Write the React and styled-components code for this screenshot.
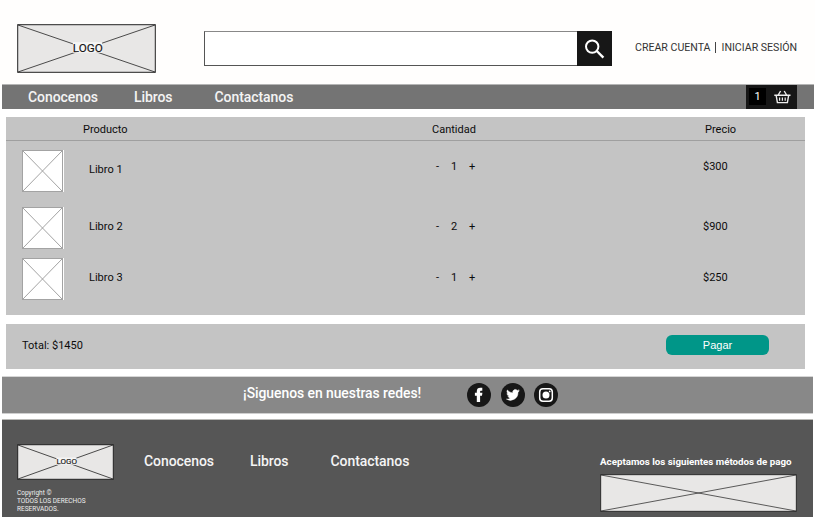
import React from "react";
import styled, { createGlobalStyle } from "styled-components";

const GlobalStyle = createGlobalStyle`
  * { box-sizing: border-box; }
  body { margin: 0; background: #fff; font-family: Roboto, "Liberation Sans", sans-serif; color: #111; overflow: hidden; }
`;

const Page = styled.div`
  width: 815px;
  height: 517px;
  display: flex;
  flex-direction: column;
  overflow: hidden;
`;

const Text = styled.span`
  display: block;
  white-space: nowrap;
  font-size: ${(p) => p.$size || 11}px;
  line-height: ${(p) => p.$line || 14}px;
  font-weight: ${(p) => p.$weight || 400};
  letter-spacing: ${(p) => p.$track || 0}px;
  color: ${(p) => p.$color || "#0c0c0c"};
`;

const Header = styled.header`
  height: 84px;
  flex: none;
  display: flex;
  align-items: flex-start;
  padding: 24px 0 0 17px;
  background: #fffefd;
`;

const SearchForm = styled.div`
  display: flex;
  width: 408px;
  height: 35px;
  margin: 7px 0 0 48px;
`;

const SearchField = styled.input`
  flex: 1;
  min-width: 0;
  padding: 0 10px;
  border: 1px solid #555;
  border-top-color: #888;
  border-right: 0;
  border-radius: 0;
  background: #fff;
  outline: none;
`;

const SearchButton = styled.button`
  width: 35px;
  padding: 0;
  border: 0;
  background: #171717;
  display: grid;
  place-items: center;
`;

const Account = styled.div`
  display: flex;
  align-items: center;
  margin: 17px 0 0 23px;
`;

const Divider = styled.i`
  width: 1px;
  height: 11px;
  margin: 0 6px 2px 4px;
  background: #444;
`;

const NavBar = styled.nav`
  flex: none;
  display: flex;
  height: 25px;
  margin: 0 1px 0 2px;
  padding: 0 17px 0 26px;
  border-top: 1px solid #b5b5b5;
  background: #747474;
`;

const NavLinks = styled.div`
  display: flex;
  align-items: flex-start;
  padding-top: ${(p) => p.$top}px;
`;

const NavLink = styled(Text).attrs({ as: "a", $size: 14, $line: 16, $weight: 500, $color: "#f4f4f4" })`
  width: ${(p) => p.$width}px;
  letter-spacing: -0.07px;
`;

const Cart = styled.div`
  display: flex;
  align-items: center;
  width: 51px;
  margin-left: auto;
  padding-left: 3px;
  background: #171717;
`;

const CartCount = styled(Text)`
  width: 17px;
  height: 17px;
  margin: 0 8px 1px 0;
  text-align: center;
  background: #000;
`;

const Products = styled.section`
  flex: none;
  height: 198px;
  margin: 8px 10px 0 6px;
  background: #c4c4c4;
`;

const ProductsHead = styled.div`
  display: grid;
  grid-template-columns: 349px 273px 1fr;
  height: 24px;
  padding: 6px 0 0 77px;
  border-bottom: 1px solid #9f9f9f;
`;

const ProductRow = styled.div`
  display: grid;
  grid-template-columns: 67px 347px 267px 1fr;
  height: 42px;
  margin-top: ${(p) => p.$gap}px;
  padding-left: 16px;
`;

const Cell = styled.div`
  display: flex;
  padding-top: ${(p) => p.$top}px;
`;

const Step = styled(Text)`
  width: ${(p) => p.$width}px;
`;

const TotalBar = styled.section`
  flex: none;
  display: flex;
  justify-content: space-between;
  height: 45px;
  margin: 9px 10px 0 6px;
  padding: 11px 36px 0 16px;
  background: #c4c4c4;
`;

const PayButton = styled.button`
  width: 103px;
  height: 20px;
  padding: 0;
  border: 0;
  border-radius: 6px;
  background: #009688;
  display: grid;
  place-items: center;
`;

const Social = styled.section`
  flex: none;
  display: flex;
  height: 38px;
  margin: 7px 2px 0;
  padding: 7px 0 0 241px;
  border-top: 1px solid #d6d6d6;
  border-bottom: 1px solid #cfcfcf;
  background: #888;
`;

const SocialText = styled(Text)`
  width: 224px;
  padding-top: 1px;
`;

const SocialIcons = styled.div`
  display: flex;
  gap: 9.6px;
  margin-top: -1.4px;
`;

const Footer = styled.footer`
  flex: 1;
  display: flex;
  margin: 5px 2px 0;
  padding-left: 15px;
  border-top: 1px solid #b9b9b6;
  background: #565656;
`;

const Brand = styled.div`
  width: 127px;
  padding-top: 24px;
`;

const Copyright = styled.p`
  margin: 10px 0 0;
  font-size: 6.5px;
  line-height: 7.8px;
  color: #eee;
`;

const Payments = styled.div`
  display: flex;
  flex-direction: column;
  gap: 5px;
  width: 198px;
  margin-left: auto;
  margin-right: 15px;
  padding-top: 35px;
`;

const Drawing = styled.svg`
  display: block;
  flex: none;
`;

function CrossBox({ width, height, fill = "#e8e7e6", stroke = "#222", line = 1, label, size }) {
  const cx = width / 2;
  const cy = height / 2;
  const mask = label ? size * 2.5 : 0;
  return (
    <Drawing width={width} height={height}>
      <rect x="0.7" y="0.7" width={width - 1.4} height={height - 1.4} fill={fill} stroke={stroke} strokeWidth={line} />
      <path d={`M1 1 L${width - 1} ${height - 1} M${width - 1} 1 L1 ${height - 1}`} stroke={stroke} strokeWidth={line * 0.8} />
      {label && (
        <>
          <rect x={cx - mask / 2 + 1} y={cy - size * 0.5 - 0.5} width={mask} height={size * 0.9} fill="#f6f6f5" />
          <text x={cx + 1.3} y={cy + size * 0.35 - 0.7} textAnchor="middle" fontSize={size} fontWeight="400" fill="#151515" stroke="#151515" strokeWidth="0.15">
            {label}
          </text>
        </>
      )}
    </Drawing>
  );
}

const Thumb = () => (
  <Drawing width="42" height="42">
    <rect width="42" height="42" fill="#fff" />
    <rect x="0.5" y="0.5" width="40" height="41" fill="none" stroke="#a3a3a3" />
    <path d="M1 1 40 41M40 1 1 41" stroke="#999" strokeWidth="0.9" />
  </Drawing>
);

const SearchIcon = () => (
  <Drawing width="20" height="20" fill="none" stroke="#fff">
    <circle cx="7.2" cy="7.6" r="6.2" strokeWidth="2" />
    <path d="M11.8 12 18.4 18.7" strokeWidth="2.4" />
  </Drawing>
);

const BasketIcon = () => (
  <Drawing width="17" height="14" fill="none" stroke="#eee" strokeWidth="1.4">
    <path d="M.3 5.2h16.2M2.2 5.6l1.2 7h10l1.2-7M4.2 5l2.4-4M12.6 5l-2.4-4" />
    <path d="M5.6 7.4v3.4M8.4 7.4v3.4M11.2 7.4v3.4" strokeWidth="1.2" />
  </Drawing>
);

const FacebookIcon = () => (
  <Drawing width="24" height="24">
    <circle cx="12" cy="12" r="12" fill="#171717" />
    <path d="M9.8 19v-6.3H7.9V9.8h1.9V8.2c0-2.4 1.3-3.5 3.5-3.5h2v3h-1.1c-.8 0-1.1.3-1.1 1v1.1h2.3l-.4 2.9h-1.9V19z" fill="#fff" />
  </Drawing>
);

const TwitterIcon = () => (
  <Drawing width="24" height="24">
    <circle cx="12" cy="12" r="12" fill="#171717" />
    <path
      transform="translate(5.4 5.2) scale(.54 .56)"
      fill="#fff"
      stroke="#fff"
      strokeWidth=".8"
      d="M24 4.6a10 10 0 0 1-2.8.8 5 5 0 0 0 2.1-2.7 10 10 0 0 1-3.1 1.2 4.9 4.9 0 0 0-8.4 4.5A14 14 0 0 1 1.7 3.2a4.9 4.9 0 0 0 1.5 6.5 5 5 0 0 1-2.2-.6v.1a4.9 4.9 0 0 0 4 4.8 5 5 0 0 1-2.3.1 4.9 4.9 0 0 0 4.6 3.4A10 10 0 0 1 0 19.5 14 14 0 0 0 21.5 7.1 10 10 0 0 0 24 4.6z"
    />
  </Drawing>
);

const InstagramIcon = () => (
  <Drawing width="24" height="24">
    <circle cx="12" cy="12" r="12" fill="#171717" />
    <rect x="5.7" y="5.7" width="12.6" height="12.6" rx="3.2" fill="none" stroke="#fff" strokeWidth="1.5" />
    <circle cx="12" cy="12" r="3.5" fill="#fff" />
    <circle cx="15.7" cy="8.4" r=".9" fill="#fff" />
  </Drawing>
);

const products = [
  { name: "Libro 1", qty: 1, price: "$300", gap: 9, nameTop: 13, top: 10 },
  { name: "Libro 2", qty: 2, price: "$900", gap: 15, nameTop: 13, top: 13 },
  { name: "Libro 3", qty: 1, price: "$250", gap: 9, nameTop: 13, top: 13 },
];

const Links = ({ top }) => (
  <NavLinks $top={top}>
    <NavLink $width={106}>Conocenos</NavLink>
    <NavLink $width={80.5}>Libros</NavLink>
    <NavLink $width={80}>Contactanos</NavLink>
  </NavLinks>
);

export default function App() {
  return (
    <Page>
      <GlobalStyle />
      <Header>
        <CrossBox width={139} height={49} label="LOGO" size={11.7} />
        <SearchForm>
          <SearchField aria-label="Buscar" />
          <SearchButton aria-label="Buscar"><SearchIcon /></SearchButton>
        </SearchForm>
        <Account>
          <Text $size={10.6} $color="#333">CREAR CUENTA</Text>
          <Divider />
          <Text $size={10.6} $color="#333">INICIAR SESIÓN</Text>
        </Account>
      </Header>
      <NavBar>
        <Links top={4} />
        <Cart>
          <CartCount $line={17} $color="#fff">1</CartCount>
          <BasketIcon />
        </Cart>
      </NavBar>
      <Products>
        <ProductsHead>
          <Text>Producto</Text>
          <Text>Cantidad</Text>
          <Text>Precio</Text>
        </ProductsHead>
        {products.map((p) => (
          <ProductRow key={p.name} $gap={p.gap}>
            <Thumb />
            <Cell $top={p.nameTop}><Text>{p.name}</Text></Cell>
            <Cell $top={p.top}>
              <Step $width={15}>-</Step>
              <Step $width={18}>{p.qty}</Step>
              <Step $width={10}>+</Step>
            </Cell>
            <Cell $top={p.top}><Text>{p.price}</Text></Cell>
          </ProductRow>
        ))}
      </Products>
      <TotalBar>
        <Text $line={22}>Total: $1450</Text>
        <PayButton><Text $color="#fff">Pagar</Text></PayButton>
      </TotalBar>
      <Social>
        <SocialText $size={13.9} $line={16} $weight={500} $track={-0.04} $color="#fff">¡Siguenos en nuestras redes!</SocialText>
        <SocialIcons>
          <FacebookIcon />
          <TwitterIcon />
          <InstagramIcon />
        </SocialIcons>
      </Social>
      <Footer>
        <Brand>
          <CrossBox width={97} height={36} label="LOGO" size={8} />
          <Copyright>
            Copyright ©<br />
            TODOS LOS DERECHOS<br />
            RESERVADOS.
          </Copyright>
        </Brand>
        <Links top={33} />
        <Payments>
          <Text $size={9.75} $weight={700} $color="#fff">Aceptamos los siguientes métodos de pago</Text>
          <CrossBox width={197} height={38} line={0.9} />
        </Payments>
      </Footer>
    </Page>
  );
}
